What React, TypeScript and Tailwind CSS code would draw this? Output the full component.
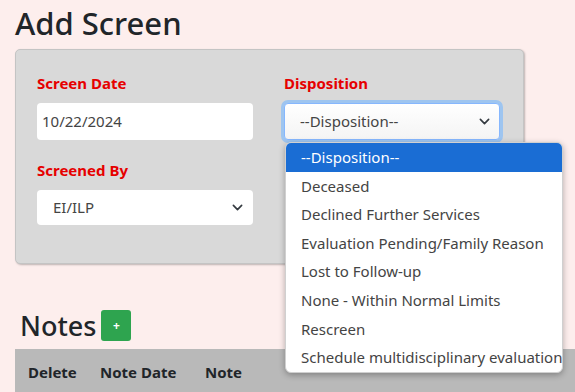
import React from 'react';

const font = { fontFamily: '"Noto Sans", "Open Sans", Arial, sans-serif' };

const options = [
  '--Disposition--',
  'Deceased',
  'Declined Further Services',
  'Evaluation Pending/Family Reason',
  'Lost to Follow-up',
  'None - Within Normal Limits',
  'Rescreen',
  'Schedule multidisciplinary evaluation',
];

function Chevron() {
  return (
    <svg width="11" height="11" viewBox="0 0 16 16" className="shrink-0">
      <path d="M2 5l6 6 6-6" fill="none" stroke="#343a40" strokeWidth="2.4" strokeLinecap="round" strokeLinejoin="round" />
    </svg>
  );
}

function Field({ label, children }: { label: string; children: React.ReactNode }) {
  return (
    <div className="flex flex-col">
      <label className="text-[15px] font-bold text-[#e60000] leading-5 h-5 mb-[10px]">{label}</label>
      {children}
    </div>
  );
}

export default function App() {
  return (
    <div className="relative w-[575px] h-[392px] overflow-hidden bg-[#fdeeed] text-[#212529]" style={font}>
      <h1 className="pl-[15px] pt-[3px] h-[49px] text-[31px] font-medium leading-[40px]">Add Screen</h1>

      {/* Screen panel */}
      <div className="ml-[15px] w-[509px] h-[215px] bg-[#d9d9d9] border border-[#c4c4c4] rounded-[5px] shadow-[1px_1px_2px_rgba(0,0,0,0.25)] px-[21px] pt-[23px]">
        <div className="grid grid-cols-[216px_216px] gap-x-[31px] gap-y-[20px]">
          <Field label="Screen Date">
            <div className="h-[37px] bg-white rounded-[4px] flex items-center pl-[5px] text-[15px] text-[#444]">10/22/2024</div>
          </Field>
          <Field label="Disposition">
            <div className="h-[37px] bg-white rounded-[4px] border border-[#86b7fe] ring-[3px] ring-[#9ec5f0] flex items-center justify-between pl-[15px] pr-[9px] text-[15px] text-[#444] bg-gradient-to-b from-white to-[#f4f4f4]">
              <span>--Disposition--</span>
              <Chevron />
            </div>
          </Field>
          <Field label="Screened By">
            <div className="h-[35px] bg-white rounded-[4px] flex items-center justify-between pl-[16px] pr-[10px] text-[15px] text-[#444]">
              <span>EI/ILP</span>
              <Chevron />
            </div>
          </Field>
        </div>
      </div>

      {/* Notes */}
      <div className="mt-[46px] flex items-center pl-[20px] h-[31px]">
        <h2 className="text-[27px] font-medium leading-none">Notes</h2>
        <button className="ml-[5px] w-[30px] h-[31px] rounded-[3px] bg-[#2ea44f] text-white text-[12px] font-bold flex items-center justify-center">+</button>
      </div>
      <div className="mt-[8px] ml-[15px] h-[60px] bg-[#b9b9b9] flex items-start pt-[12px] text-[15px] font-bold text-[#212529]">
        <span className="pl-[13px] w-[85px]">Delete</span>
        <span className="w-[105px]">Note Date</span>
        <span>Note</span>
      </div>

      {/* Open select list */}
      <div className="absolute left-[285px] top-[142px] w-[278px] bg-white rounded-[6px] overflow-hidden shadow-[0_2px_6px_rgba(0,0,0,0.3)] border border-[#d0d0d0]">
        {options.map((o, i) => (
          <div
            key={o}
            className={`h-[28.6px] flex items-center pl-[15px] text-[15px] whitespace-nowrap ${i === 0 ? 'bg-[#1a6dd4] text-white' : 'text-[#444]'}`}
          >
            {o}
          </div>
        ))}
      </div>
    </div>
  );
}
